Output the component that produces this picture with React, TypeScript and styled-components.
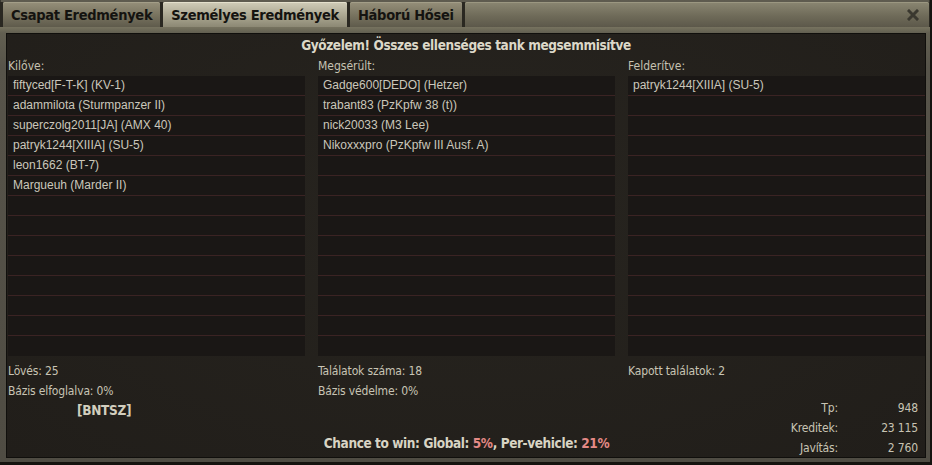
import React from "react";
import styled, { createGlobalStyle } from "styled-components";

const narrow = `"Liberation Sans Narrow", "DejaVu Sans Condensed", "Arial Narrow", sans-serif`;

const GlobalStyle = createGlobalStyle`
  html, body {
    margin: 0;
    padding: 0;
    background: #15130f;
  }
`;

const killed = [
  "fiftyced[F-T-K] (KV-1)",
  "adammilota (Sturmpanzer II)",
  "superczolg2011[JA] (AMX 40)",
  "patryk1244[XIIIA] (SU-5)",
  "leon1662 (BT-7)",
  "Margueuh (Marder II)",
];

const damaged = [
  "Gadge600[DEDO] (Hetzer)",
  "trabant83 (PzKpfw 38 (t))",
  "nick20033 (M3 Lee)",
  "Nikoxxxpro (PzKpfw III Ausf. A)",
];

const spotted = ["patryk1244[XIIIA] (SU-5)"];

const ROWS = 14;

const App: React.FC = () => {
  return (
    <>
      <GlobalStyle />
      <Window>
        <TabBar>
          <Tab>Csapat Eredmények</Tab>
          <Tab $active>Személyes Eredmények</Tab>
          <Tab>Háború Hősei</Tab>
          <TabFiller>
            <CloseIcon viewBox="0 0 12 12">
              <path d="M2 2 L10 10 M10 2 L2 10" />
            </CloseIcon>
          </TabFiller>
        </TabBar>
        <Frame>
          <Panel>
            <Title>Győzelem! Összes ellenséges tank megsemmisítve</Title>
            <Columns>
              <PlayerList label="Kilőve:" items={killed} />
              <PlayerList label="Megsérült:" items={damaged} />
              <PlayerList label="Felderítve:" items={spotted} />
            </Columns>
            <Stats>
              <StatColumn>
                <StatLine>Lövés: 25</StatLine>
                <StatLine>Bázis elfoglalva: 0%</StatLine>
                <Clan>[BNTSZ]</Clan>
              </StatColumn>
              <StatColumn>
                <StatLine>Találatok száma: 18</StatLine>
                <StatLine>Bázis védelme: 0%</StatLine>
                <Chance>
                  Chance to win: Global: <Percent>5%</Percent>, Per-vehicle:{" "}
                  <Percent>21%</Percent>
                </Chance>
              </StatColumn>
              <StatColumn>
                <StatLine>Kapott találatok: 2</StatLine>
                <Rewards>
                  <RewardLabel>Tp:</RewardLabel>
                  <RewardValue>948</RewardValue>
                  <RewardLabel>Kreditek:</RewardLabel>
                  <RewardValue>23 115</RewardValue>
                  <RewardLabel>Javítás:</RewardLabel>
                  <RewardValue>2 760</RewardValue>
                </Rewards>
              </StatColumn>
            </Stats>
          </Panel>
        </Frame>
      </Window>
    </>
  );
};

const PlayerList: React.FC<{ label: string; items: string[] }> = ({
  label,
  items,
}) => (
  <Column>
    <ColumnLabel>{label}</ColumnLabel>
    {Array.from({ length: ROWS }).map((_, i) => (
      <Row key={i}>{items[i] ?? ""}</Row>
    ))}
  </Column>
);

export default App;

const Window = styled.div`
  width: 930px;
  height: 462px;
  display: flex;
  flex-direction: column;
  background: linear-gradient(#5e5b4f, #4b483f);
  box-shadow: inset 1px 0 #3a3830, inset -1px 0 #3a3830;
`;

const TabBar = styled.div`
  display: flex;
  height: 25px;
  margin-top: 2px;
  padding-left: 3px;
  padding-right: 1px;
  gap: 3px;
  background: #2a2821;
`;

const Tab = styled.div<{ $active?: boolean }>`
  display: flex;
  align-items: center;
  padding: 0 8px;
  font-family: ${narrow};
  font-weight: bold;
  font-size: 14.5px;
  letter-spacing: -0.3px;
  color: #141310;
  border-radius: 2px 2px 0 0;
  background: ${(p) =>
    p.$active
      ? "linear-gradient(#d0ccb8, #aaa690 55%, #8c8874)"
      : "linear-gradient(#958f7a, #77725e 55%, #5f5b4c)"};
  box-shadow: inset 0 1px ${(p) => (p.$active ? "#e4e0cc" : "#a39e88")};
`;

const TabFiller = styled.div`
  flex: 1;
  display: flex;
  align-items: center;
  justify-content: flex-end;
  padding-right: 10px;
  border-radius: 2px 2px 0 0;
  background: linear-gradient(#8a8672, #6f6b59 55%, #5c584a);
  box-shadow: inset 0 1px #9b9781;
`;

const CloseIcon = styled.svg`
  width: 12px;
  height: 12px;
  fill: none;
  stroke: #3a382f;
  stroke-width: 3;
  stroke-linecap: square;
`;

const Frame = styled.div`
  flex: 1;
  display: flex;
  padding: 6px 4px 4px 6px;
  background: linear-gradient(#77735f, #625f51 6px, #57544a 40px, #4f4c43);
`;

const Panel = styled.div`
  flex: 1;
  display: flex;
  flex-direction: column;
  background: radial-gradient(ellipse at 50% 40%, #27241f, #211e1a);
  border: 1px solid #100f0c;
`;

const Title = styled.div`
  height: 22px;
  line-height: 23px;
  text-align: center;
  font-family: ${narrow};
  font-weight: bold;
  font-size: 13.5px;
  letter-spacing: -0.4px;
  color: #dcd8c8;
`;

const Columns = styled.div`
  display: grid;
  grid-template-columns: repeat(3, 297px);
  column-gap: 13px;
  padding-left: 1px;
`;

const Column = styled.div`
  display: flex;
  flex-direction: column;
`;

const ColumnLabel = styled.div`
  height: 20px;
  line-height: 20px;
  font-family: ${narrow};
  font-size: 12px;
  color: #c6c2b2;
`;

const Row = styled.div`
  box-sizing: border-box;
  height: 20px;
  line-height: 19px;
  padding-left: 5px;
  font-family: "Liberation Sans", Arial, sans-serif;
  font-size: 12px;
  color: #cbc7bb;
  background: #1a1715;
  border-bottom: 1px solid #3b2323;
  white-space: nowrap;

  &:last-child {
    border-bottom: none;
  }
`;

const Stats = styled.div`
  flex: 1;
  display: grid;
  grid-template-columns: repeat(3, 297px);
  column-gap: 13px;
  padding: 5px 0 0 1px;
`;

const StatColumn = styled.div`
  display: flex;
  flex-direction: column;
`;

const StatLine = styled.div`
  line-height: 20px;
  font-family: ${narrow};
  font-size: 12px;
  letter-spacing: -0.15px;
  color: #c8c4b4;
`;

const Clan = styled.div`
  line-height: 18px;
  padding-left: 69px;
  font-family: ${narrow};
  font-weight: bold;
  font-size: 13.5px;
  letter-spacing: -0.3px;
  color: #d2cebe;
`;

const Chance = styled.div`
  margin-top: auto;
  margin-bottom: 4px;
  line-height: 20px;
  text-align: center;
  font-family: ${narrow};
  font-weight: bold;
  font-size: 13.5px;
  letter-spacing: -0.4px;
  color: #d8d4c4;
  white-space: nowrap;
`;

const Percent = styled.span`
  color: #e58a86;
`;

const Rewards = styled.div`
  margin-top: auto;
  margin-bottom: -1px;
  display: grid;
  grid-template-columns: auto 80px;
  justify-content: end;
  padding-right: 7px;
  font-family: ${narrow};
  font-size: 12px;
  letter-spacing: -0.15px;
  line-height: 20px;
  color: #c8c4b4;
`;

const RewardLabel = styled.div`
  text-align: right;
`;

const RewardValue = styled.div`
  text-align: right;
`;
